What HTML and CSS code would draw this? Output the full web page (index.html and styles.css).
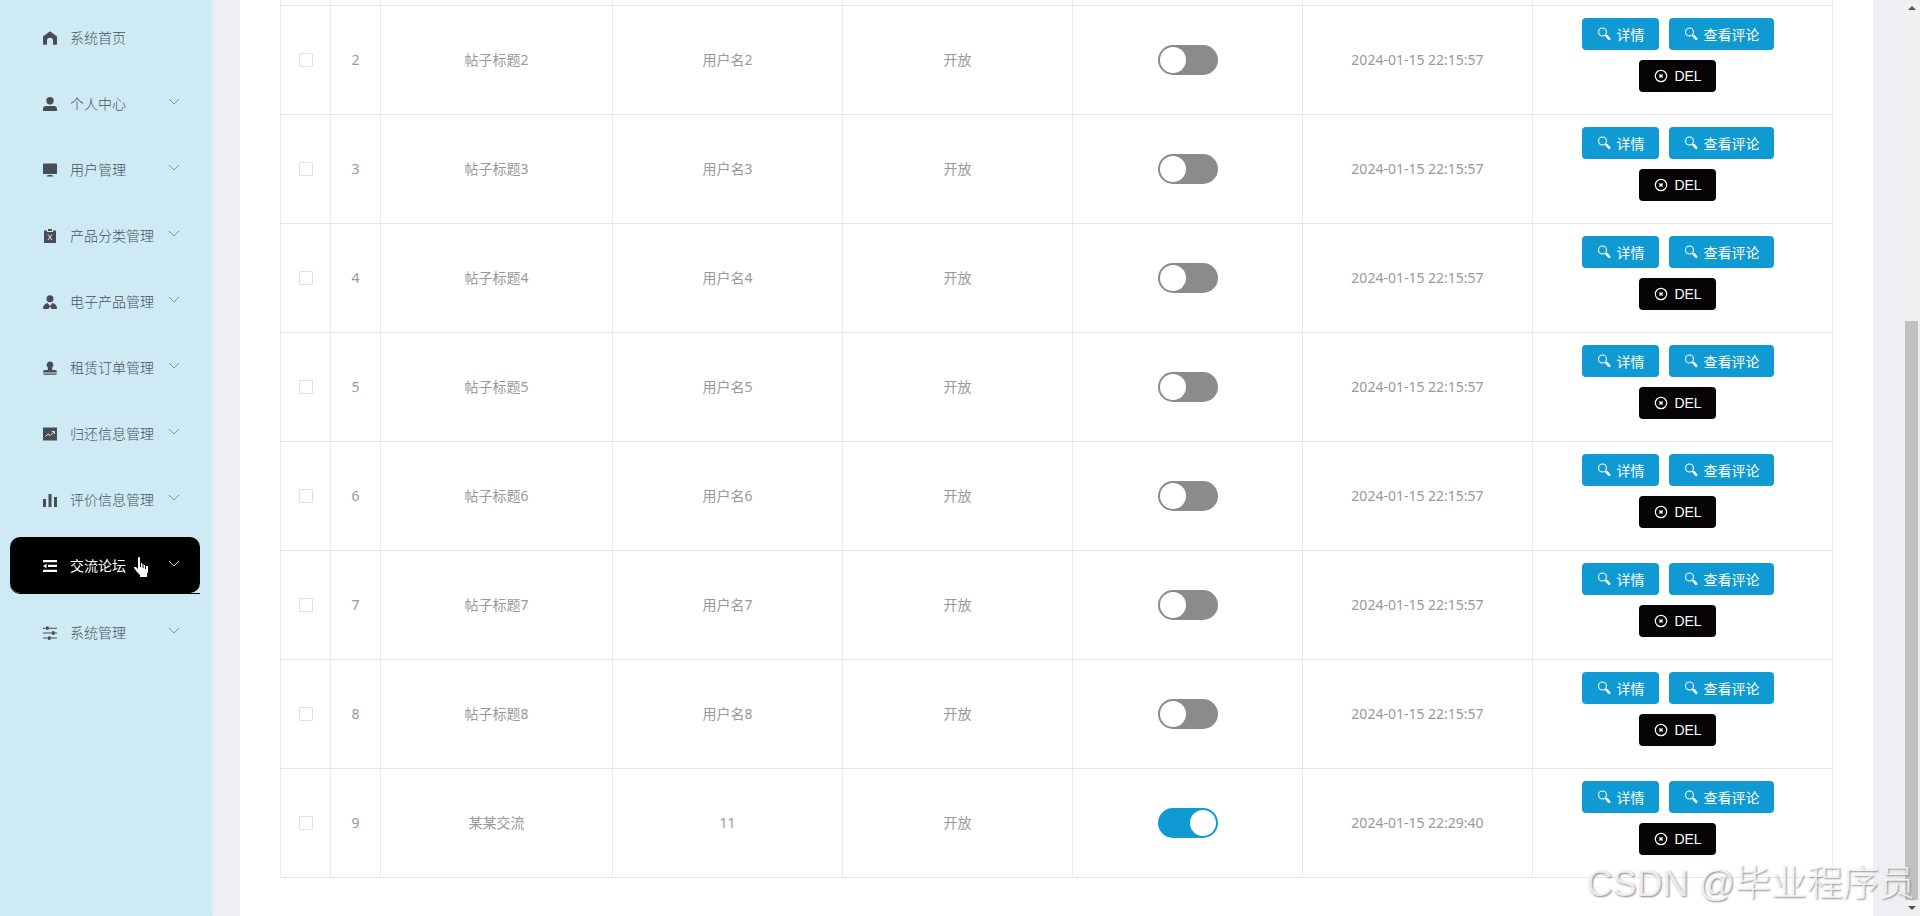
FILE: index.html
```
<!DOCTYPE html>
<html lang="zh-CN">
<head>
	<meta charset="utf-8">
	<meta name="viewport" content="width=device-width, initial-scale=1">
	<title>交流论坛</title>
	<link rel="stylesheet" href="styles.css">
</head>
<body>
	<svg class="sprite" aria-hidden="true">
		<symbol id="down" viewBox="0 0 12 12"><path d="M1 3l5 5 5-5" fill="none" stroke="currentColor"/></symbol>
		<symbol id="search" viewBox="0 0 14 14"><g fill="none" stroke="currentColor"><circle cx="5.5" cy="5" r="4" stroke-width="1.1"/><path d="M8.300 7.800l1.200 1.200" stroke-width="1.200"/><path d="M9.800 9.200l2.400 2.600" stroke-width="2.600" stroke-linecap="round"/></g></symbol>
		<symbol id="close" viewBox="0 0 14 14"><g fill="none" stroke="currentColor" stroke-width="1.200"><circle cx="7" cy="7" r="5.700"/><path d="M5.400 5.400l3.200 3.200M8.600 5.400L5.400 8.600" stroke-width="1.400"/></g></symbol>
	</svg>
	<div class="layout">
		<nav class="sidebar">
			<a class="item" href="#"><svg class="icon" viewBox="0 0 14 14"><path d="M7 .2L0 5.500V13a.8.8 0 0 0 .8.800H4V9.800a3 3 0 0 1 6 0v4h3.200a.8.8 0 0 0 .8-.8V5.500z"/></svg><span>系统首页</span></a>
			<a class="item" href="#"><svg class="icon" viewBox="0 0 14 14"><circle cx="7" cy="3.700" r="3.700"/><path d="M0 14v-2q0-3 3-3h8q3 0 3 3v2z"/></svg><span>个人中心</span><svg class="arrow"><use href="#down"/></svg></a>
			<a class="item" href="#"><svg class="icon" viewBox="0 0 14 14"><path d="M1 .5h12a1 1 0 0 1 1 1V11H0V1.500a1 1 0 0 1 1-1zM7 11.700q3 0 3.500 1.800h-7q.5-1.800 3.500-1.800z"/></svg><span>用户管理</span><svg class="arrow"><use href="#down"/></svg></a>
			<a class="item" href="#"><svg class="icon" viewBox="0 0 14 14"><path d="M1 1.500h3V3h6V1.500h3V14H1z"/><path d="M5 0h4v2H5z"/><path class="line" d="M5 5.500l4 5.500M9 5.500L5 11"/></svg><span>产品分类管理</span><svg class="arrow"><use href="#down"/></svg></a>
			<a class="item" href="#"><svg class="icon" viewBox="0 0 14 14"><circle cx="7" cy="3.700" r="3.500"/><path d="M0 14q0-5 4.500-6L7 11l2.500-3Q14 9 14 14H8.500L7 11.500 5.500 14z"/></svg><span>电子产品管理</span><svg class="arrow"><use href="#down"/></svg></a>
			<a class="item" href="#"><svg class="icon" viewBox="0 0 14 14"><path d="M7 .5a3.400 3.400 0 0 1 2.200 6V9H12a2 2 0 0 1 2 2v.5H0V11a2 2 0 0 1 2-2h2.800V6.500A3.400 3.400 0 0 1 7 .5zM.5 12.500h13v1.200H.5z"/></svg><span>租赁订单管理</span><svg class="arrow"><use href="#down"/></svg></a>
			<a class="item" href="#"><svg class="icon" viewBox="0 0 14 14"><path d="M0 .5h14v13H0z"/><path class="line" d="M2.500 9.500L5 7l2.200 1.600 4-4M8.800 4.500h2.600V7"/></svg><span>归还信息管理</span><svg class="arrow"><use href="#down"/></svg></a>
			<a class="item" href="#"><svg class="icon" viewBox="0 0 14 14"><path d="M0 6h3v8H0zM5.500 1h3v13h-3zM11 4h3v10h-3z"/></svg><span>评价信息管理</span><svg class="arrow"><use href="#down"/></svg></a>
			<div class="current">
				<a class="item active" href="#"><svg class="icon" viewBox="0 0 14 14"><path d="M0 1h14v2.300H0zM5 5.800h9v2.300H5zM0 10.700h14V13H0zM3.500 4.700v4.500L0 7z"/></svg><span>交流论坛</span><svg class="arrow"><use href="#down"/></svg></a>
			</div>
			<a class="item" href="#"><svg class="icon" viewBox="0 0 14 14"><path d="M0 1.700h14v1H0zM0 6.500h14v1H0zM0 11.500h14v1H0zM3 .5h2.600v3.300H3zM9 5.300h2.600v3.400H9zM5 10.400h2.600v3.300H5z"/></svg><span>系统管理</span><svg class="arrow"><use href="#down"/></svg></a>
		</nav>
		<main class="content">
			<table class="posts">
				<colgroup><col class="narrow"><col class="narrow"><col class="title"><col><col><col><col><col class="actions"></colgroup>
				<tbody>
					<tr class="cut"><td></td><td></td><td></td><td></td><td></td><td></td><td></td><td></td></tr>
					<tr>
						<td><input type="checkbox" class="check" aria-label="选择2"></td><td>2</td><td>帖子标题2</td><td>用户名2</td><td>开放</td>
						<td><input type="checkbox" class="switch" aria-label="状态2"></td><td>2024-01-15 22:15:57</td>
						<td class="ops"><button class="btn"><svg><use href="#search"/></svg>详情</button><button class="btn"><svg><use href="#search"/></svg>查看评论</button><button class="btn del"><svg><use href="#close"/></svg>DEL</button></td>
					</tr>
					<tr>
						<td><input type="checkbox" class="check" aria-label="选择3"></td><td>3</td><td>帖子标题3</td><td>用户名3</td><td>开放</td>
						<td><input type="checkbox" class="switch" aria-label="状态3"></td><td>2024-01-15 22:15:57</td>
						<td class="ops"><button class="btn"><svg><use href="#search"/></svg>详情</button><button class="btn"><svg><use href="#search"/></svg>查看评论</button><button class="btn del"><svg><use href="#close"/></svg>DEL</button></td>
					</tr>
					<tr>
						<td><input type="checkbox" class="check" aria-label="选择4"></td><td>4</td><td>帖子标题4</td><td>用户名4</td><td>开放</td>
						<td><input type="checkbox" class="switch" aria-label="状态4"></td><td>2024-01-15 22:15:57</td>
						<td class="ops"><button class="btn"><svg><use href="#search"/></svg>详情</button><button class="btn"><svg><use href="#search"/></svg>查看评论</button><button class="btn del"><svg><use href="#close"/></svg>DEL</button></td>
					</tr>
					<tr>
						<td><input type="checkbox" class="check" aria-label="选择5"></td><td>5</td><td>帖子标题5</td><td>用户名5</td><td>开放</td>
						<td><input type="checkbox" class="switch" aria-label="状态5"></td><td>2024-01-15 22:15:57</td>
						<td class="ops"><button class="btn"><svg><use href="#search"/></svg>详情</button><button class="btn"><svg><use href="#search"/></svg>查看评论</button><button class="btn del"><svg><use href="#close"/></svg>DEL</button></td>
					</tr>
					<tr>
						<td><input type="checkbox" class="check" aria-label="选择6"></td><td>6</td><td>帖子标题6</td><td>用户名6</td><td>开放</td>
						<td><input type="checkbox" class="switch" aria-label="状态6"></td><td>2024-01-15 22:15:57</td>
						<td class="ops"><button class="btn"><svg><use href="#search"/></svg>详情</button><button class="btn"><svg><use href="#search"/></svg>查看评论</button><button class="btn del"><svg><use href="#close"/></svg>DEL</button></td>
					</tr>
					<tr>
						<td><input type="checkbox" class="check" aria-label="选择7"></td><td>7</td><td>帖子标题7</td><td>用户名7</td><td>开放</td>
						<td><input type="checkbox" class="switch" aria-label="状态7"></td><td>2024-01-15 22:15:57</td>
						<td class="ops"><button class="btn"><svg><use href="#search"/></svg>详情</button><button class="btn"><svg><use href="#search"/></svg>查看评论</button><button class="btn del"><svg><use href="#close"/></svg>DEL</button></td>
					</tr>
					<tr>
						<td><input type="checkbox" class="check" aria-label="选择8"></td><td>8</td><td>帖子标题8</td><td>用户名8</td><td>开放</td>
						<td><input type="checkbox" class="switch" aria-label="状态8"></td><td>2024-01-15 22:15:57</td>
						<td class="ops"><button class="btn"><svg><use href="#search"/></svg>详情</button><button class="btn"><svg><use href="#search"/></svg>查看评论</button><button class="btn del"><svg><use href="#close"/></svg>DEL</button></td>
					</tr>
					<tr>
						<td><input type="checkbox" class="check" aria-label="选择9"></td><td>9</td><td>某某交流</td><td>11</td><td>开放</td>
						<td><input type="checkbox" class="switch" aria-label="状态9" checked></td><td>2024-01-15 22:29:40</td>
						<td class="ops"><button class="btn"><svg><use href="#search"/></svg>详情</button><button class="btn"><svg><use href="#search"/></svg>查看评论</button><button class="btn del"><svg><use href="#close"/></svg>DEL</button></td>
					</tr>
				</tbody>
			</table>
		</main>
		<div class="scrollbar" aria-hidden="true">
			<svg class="tip" viewBox="0 0 8 4"><path d="M0 4l4-4 4 4z"/></svg>
			<div class="thumb"></div>
			<svg class="tip" viewBox="0 0 8 4"><path d="M0 0l4 4 4-4z"/></svg>
		</div>
	</div>
	<svg class="pointer" viewBox="0 0 16 20" aria-hidden="true"><path d="M4 1q0-1 1-1t1 1v5h2v1h2v1h2v1h2v6l-1 2v3H6v-2L3 15 0 11v-1h2l2 2z"/><path class="fingers" d="M6.500 6v4M9 7v4M11.500 8v4"/></svg>
	<div class="watermark">CSDN @毕业程序员</div>
</body>
</html>
```
FILE: styles.css
```
* {box-sizing: border-box;}
body{
	margin: 0;
	color: #999;
	background-color: #eeeff2;
	font-family: "Noto Sans", "Noto Sans CJK SC", sans-serif;
	font-size: 14px;
	line-height: 20px;
}
.sprite{
	position: absolute;
	width: 0;
	height: 0;
}
.layout{
	display: flex;
	height: 100vh;
	overflow: hidden;
}

/* left menu */
.sidebar{
	flex: none;
	width: 212px;
	padding: 9px 12px 9px 10px;
	background-color: #ceeaf4;
	box-shadow: 0 0 4px #dcdff0;
}
.item{
	display: flex;
	align-items: center;
	height: 56px;
	margin-bottom: 10px;
	padding: 2px 20px 0 33px;
	border-radius: 10px;
	color: #46525a;
	font-weight: 300;
	text-decoration: none;
}
.item span{
	flex: 1;
	margin-left: 13px;
}
.icon{
	width: 14px;
	height: 14px;
	fill: #474d52;
}
.icon .line{
	fill: none;
	stroke: #ceeaf4;
}
.arrow{
	width: 12px;
	height: 12px;
	margin-bottom: 4px;
	color: #7c929c;
}
.current{
	margin-bottom: 10px;
	border-bottom: 1px solid #000;
	border-radius: 0 0 0 10px;
}
.active{
	margin-bottom: 0;
	background-color: #000;
	color: #fff;
	font-weight: 400;
}
.active .icon {fill: #fff;}
.active .arrow {color: #ccc;}

/* table */
.content{
	flex: 1;
	margin: 0 30px 0 28px;
	padding: 0 40px;
	background-color: #fff;
}
.posts{
	width: 100%;
	table-layout: fixed;
	border-collapse: separate;
	border-spacing: 0;
	border-left: 1px solid #ebebee;
}
.narrow {width: 50px;}
.title {width: 232px;}
.actions {width: 300px;}
.posts td{
	height: 109px;
	padding: 0;
	border-right: 1px solid #ebebee;
	border-bottom: 1px solid #e6e6e8;
	text-align: center;
	vertical-align: middle;
}
.posts .cut td {height: 6px;}
.posts .ops{
	padding: 12px 44px;
	font-size: 0;
}
.check{
	display: block;
	appearance: none;
	width: 14px;
	height: 14px;
	margin: 0 auto;
	border: 1px solid #dcdfe6;
	border-radius: 1px;
	background-color: #fff;
}
.switch{
	display: block;
	appearance: none;
	width: 60px;
	height: 30px;
	margin: 0 auto;
	padding: 2px;
	border-radius: 15px;
	background-color: #8b8b8b;
}
.switch::before{
	content: "";
	display: block;
	width: 26px;
	height: 26px;
	border-radius: 50%;
	background-color: #fff;
}
.switch:checked {background-color: #0f9ad3;}
.switch:checked::before {margin-left: auto;}
.btn{
	display: inline-flex;
	align-items: center;
	gap: 6px;
	height: 32px;
	margin: 0 10px 10px 0;
	padding: 0 14px 0 15px;
	border: none;
	border-radius: 4px;
	background-color: #0f9ad3;
	color: #fff;
	font-family: "Liberation Sans", "Noto Sans CJK SC", sans-serif;
	font-size: 14px;
	vertical-align: top;
}
.btn svg{
	width: 14px;
	height: 14px;
}
.del {background-color: #060405;}

/* page scrollbar */
.scrollbar{
	display: flex;
	flex-direction: column;
	align-items: center;
	flex: none;
	width: 17px;
	padding: 6px 0;
	background-color: #f0f0f1;
}
.tip{
	width: 8px;
	height: 4px;
	fill: #555;
}
.thumb{
	width: 13px;
	height: 64%;
	margin: auto 0 6px;
	background-color: #c1c1c1;
}

.pointer{
	position: absolute;
	left: 134px;
	top: 557px;
	width: 16px;
	height: 20px;
	fill: #fff;
}
.fingers{
	fill: none;
	stroke: #000;
}
.watermark{
	position: absolute;
	right: 5px;
	bottom: 6px;
	color: rgba(255, 255, 255, .8);
	font-family: "Liberation Sans", "Noto Sans CJK SC", sans-serif;
	font-size: 36px;
	font-weight: 300;
	line-height: 52px;
	text-shadow: 1px 1px 2px #888;
	white-space: nowrap;
}
```
